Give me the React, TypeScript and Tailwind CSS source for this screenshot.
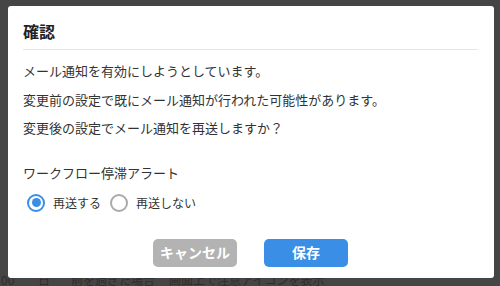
import React from "react";

const Radio = ({ checked, label }: { checked: boolean; label: string }) => (
  <label className="flex items-center gap-[8px]">
    {checked ? (
      <span className="flex size-[18px] items-center justify-center rounded-full border-2 border-[#3a8ee6] bg-white">
        <span className="size-[9px] rounded-full bg-[#3a8ee6]" />
      </span>
    ) : (
      <span className="size-[18px] rounded-full border-2 border-[#aaaaaa] bg-white" />
    )}
    <span className="text-[12px] leading-[20px] text-[#333]">{label}</span>
  </label>
);

export default function App() {
  return (
    <div
      className="relative h-[286px] w-[500px] overflow-hidden bg-[#454545] pl-[8px] pt-[6px]"
      style={{ fontFamily: '"Noto Sans CJK JP", "Noto Sans", sans-serif' }}
    >
      <div className="absolute bottom-0 left-[1px] flex text-[12px] leading-[13px] text-[#2e2e2e]">
        <span className="w-[37px]">00</span>
        <span className="w-[33px]">日</span>
        <span className="w-[98px]">前を過ぎた場合</span>
        <span>画面上で注意アイコンを表示</span>
      </div>

      <div className="relative flex h-[272px] w-[486px] flex-col rounded-[3px] bg-white pl-[15px] pr-[16px] pt-[14px]">
        <h1 className="text-[16px] font-bold leading-[22px] text-[#222]">確認</h1>
        <div className="mt-[7px] border-t border-[#e6e6e6]" />

        <div className="mt-[7px] text-[13px] leading-[28.5px] text-[#333]">
          <p>メール通知を有効にしようとしています。</p>
          <p>変更前の設定で既にメール通知が行われた可能性があります。</p>
          <p>変更後の設定でメール通知を再送しますか？</p>
        </div>

        <p className="mt-[20px] text-[13px] leading-[20px] text-[#333]">ワークフロー停滞アラート</p>

        <div className="ml-[4px] mt-[10px] flex items-center gap-[9px]">
          <Radio checked label="再送する" />
          <Radio checked={false} label="再送しない" />
        </div>

        <div className="mt-[26px] flex justify-center gap-[27px]">
          <button className="h-[28px] w-[84px] rounded-[5px] bg-[#b3b3b3] text-[14px] font-bold text-white">
            キャンセル
          </button>
          <button className="h-[28px] w-[84px] rounded-[5px] bg-[#3a8ee6] text-[14px] font-bold text-white">
            保存
          </button>
        </div>
      </div>
    </div>
  );
}
